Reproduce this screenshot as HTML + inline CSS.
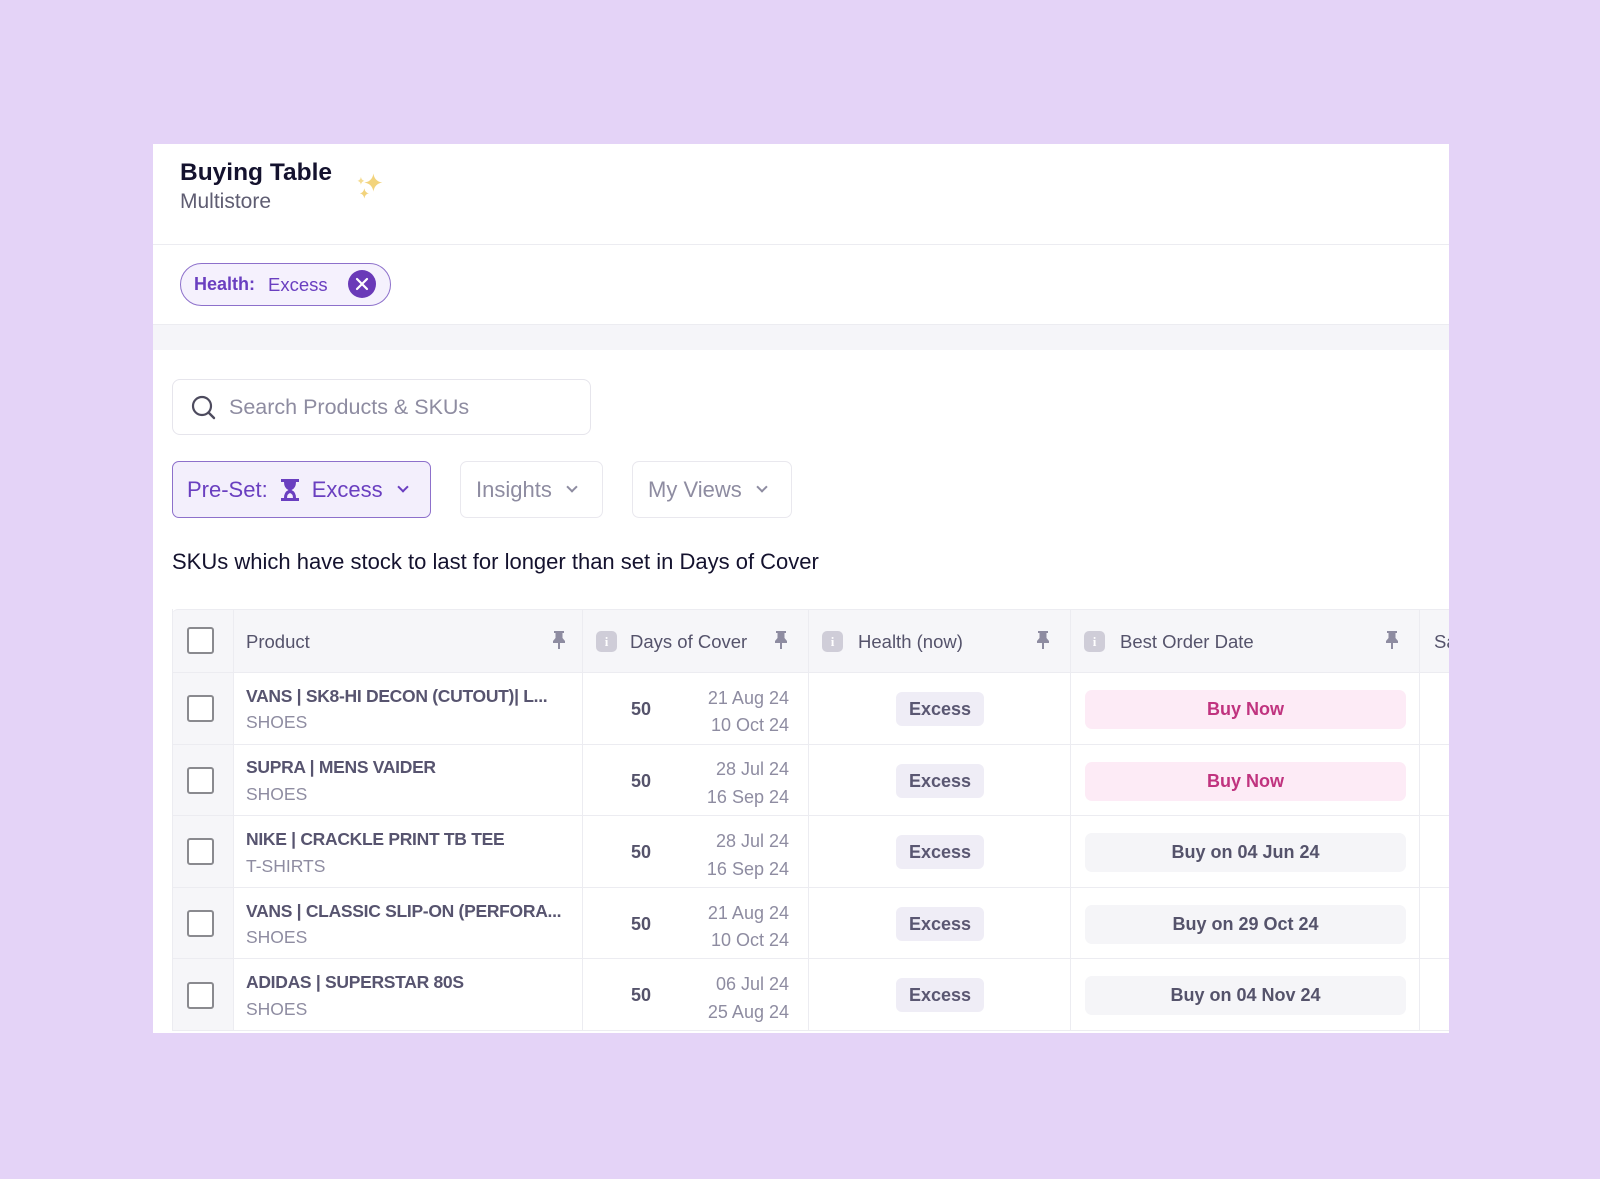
<!DOCTYPE html>
<html><head><meta charset="utf-8"><style>
*{box-sizing:border-box;margin:0;padding:0}
body{width:1600px;height:1179px;background:#e4d3f7;font-family:"Liberation Sans",sans-serif;position:relative;overflow:hidden}
.a{position:absolute}
#card{position:absolute;left:153px;top:144px;width:1296px;height:889px;background:#fff;overflow:hidden}
.t{white-space:nowrap}
.btn{position:absolute;border:1px solid #e9e8ee;border-radius:7px;background:#fff;color:#8e8ca1;font-size:22px;display:flex;align-items:center}
.chev{display:inline-block;width:8px;height:8px;border-right:2px solid currentColor;border-bottom:2px solid currentColor;transform:rotate(45deg);margin-left:16px;margin-top:-5px}
.vl{position:absolute;top:465px;width:1px;height:421px;background:#ececf1}
.hl{position:absolute;left:19px;width:1280px;height:1px;background:#ececf1}
.cb{position:absolute;left:34px;width:27px;height:27px;border:2.5px solid #8a8a8f;border-radius:3px;background:#fff}
.nm{position:absolute;left:93px;font-size:17.5px;font-weight:bold;color:#57546f;letter-spacing:-.3px}
.cat{position:absolute;left:93px;font-size:17.5px;color:#8e8ca1}
.n50{position:absolute;left:473px;width:30px;text-align:center;font-size:18px;font-weight:bold;color:#55536b}
.dt{position:absolute;right:660px;font-size:18px;color:#8e8ca1;text-align:right}
.ex{position:absolute;left:743px;width:88px;height:34px;border-radius:6px;background:#efedf6;color:#5a5772;font-weight:bold;font-size:18px;display:flex;align-items:center;justify-content:center}
.buy{position:absolute;left:932px;width:321px;height:39px;border-radius:7px;display:flex;align-items:center;justify-content:center;font-size:18px;font-weight:bold}
.pk{background:#fdebf6;color:#c0337f}
.gr{background:#f5f5f8;color:#55536b}
.hd{position:absolute;top:487px;font-size:18.5px;color:#55536b}
.inf{position:absolute;top:487px;width:21px;height:21px;border-radius:5px;background:#cfcdd8;color:#fff;font-size:13px;font-weight:bold;text-align:center;line-height:21px;font-family:"Liberation Serif",serif}
.pin{position:absolute;top:486px}
</style></head><body>
<div id="card">
 <div class="a t" style="left:27px;top:15px;font-size:24.5px;font-weight:bold;color:#14122e">Buying Table</div>
 <div class="a t" style="left:27px;top:46px;font-size:21px;color:#5f5d72">Multistore</div>
 <svg class="a" style="left:200px;top:26px" width="34" height="32" viewBox="0 0 30 28">
  <path d="M18 3 Q19 10 26 11 Q19 12 18 19 Q17 12 10 11 Q17 10 18 3Z" fill="#f2d37c"/>
  <path d="M7 6 Q7.5 9 10 9.5 Q7.5 10 7 13 Q6.5 10 4 9.5 Q6.5 9 7 6Z" fill="#f5dc92"/>
  <path d="M10 16 Q10.7 20 14 20.5 Q10.7 21 10 25 Q9.3 21 6 20.5 Q9.3 20 10 16Z" fill="#f2d37c"/>
 </svg>
 <div class="a" style="left:0;top:100px;width:1296px;height:1px;background:#ececf1"></div>
 <div class="a" style="left:27px;top:119px;width:211px;height:43px;border:1.5px solid #8d70cb;border-radius:22px;background:#f5f1fd"></div>
 <div class="a t" style="left:41px;top:130px;font-size:18px;font-weight:bold;color:#6a3fc0">Health:</div>
 <div class="a t" style="left:115px;top:130px;font-size:18.5px;color:#6a3fc0">Excess</div>
 <div class="a" style="left:195px;top:126px;width:28px;height:28px;border-radius:50%;background:#6a3ab8"></div>
 <svg class="a" style="left:195px;top:126px" width="28" height="28"><path d="M9 9L19 19M19 9L9 19" stroke="#fff" stroke-width="2.2" stroke-linecap="round"/></svg>
 <div class="a" style="left:0;top:180px;width:1296px;height:26px;background:#f5f5f9;border-top:1px solid #ececf1"></div>
 <div class="a" style="left:19px;top:235px;width:419px;height:56px;border:1px solid #e6e5ec;border-radius:8px"></div>
 <svg class="a" style="left:37px;top:250px" width="28" height="28"><circle cx="12" cy="12" r="9" fill="none" stroke="#4d4b5e" stroke-width="2.2"/><path d="M18.5 18.5L24 24" stroke="#4d4b5e" stroke-width="2.4" stroke-linecap="round"/></svg>
 <div class="a t" style="left:76px;top:251px;font-size:21.5px;color:#8e8ca1">Search Products &amp; SKUs</div>
 <div class="btn" style="left:19px;top:317px;width:259px;height:57px;border:1.5px solid #8d70cb;background:#f3effc;color:#6a3fc0;padding-left:14px">
  <span>Pre-Set:</span>
  <svg style="margin:0 12px 0 12px" width="20" height="24" viewBox="0 0 20 24"><path d="M1 1H19V4H16Q16 10 11.5 12Q16 14 16 20H19V23H1V20H4Q4 14 8.5 12Q4 10 4 4H1Z" fill="#6a3fc0"/><path d="M7 20Q7 16 10 15Q13 16 13 20Z" fill="#f3effc"/></svg>
  <span>Excess</span><span class="chev"></span></div>
 <div class="btn" style="left:307px;top:317px;width:143px;height:57px;padding-left:15px"><span>Insights</span><span class="chev"></span></div>
 <div class="btn" style="left:479px;top:317px;width:160px;height:57px;padding-left:15px"><span>My Views</span><span class="chev"></span></div>
 <div class="a t" style="left:19px;top:405px;font-size:22px;color:#14122e">SKUs which have stock to last for longer than set in Days of Cover</div>

 <div class="a" style="left:19px;top:465px;width:1280px;height:64px;background:#f6f6f9;border-top:1px solid #ececf1;border-radius:6px 0 0 0"></div>
 <div class="a" style="left:19px;top:529px;width:61px;height:357px;background:#f6f6f9"></div>
 <div class="vl" style="left:19px"></div><div class="vl" style="left:80px"></div><div class="vl" style="left:429px"></div><div class="vl" style="left:655px"></div><div class="vl" style="left:917px"></div><div class="vl" style="left:1266px"></div>
 <div class="hl" style="top:528px"></div><div class="hl" style="top:600px"></div><div class="hl" style="top:671px"></div><div class="hl" style="top:743px"></div><div class="hl" style="top:814px"></div><div class="hl" style="top:886px"></div>
 <div class="cb" style="top:483px"></div>
 <div class="hd" style="left:93px">Product</div>
 <div class="hd" style="left:477px">Days of Cover</div>
 <div class="hd" style="left:705px">Health (now)</div>
 <div class="hd" style="left:967px">Best Order Date</div>
 <div class="hd" style="left:1281px">Sa</div>
 <div class="inf" style="left:443px">i</div><div class="inf" style="left:669px">i</div><div class="inf" style="left:931px">i</div>
 <svg class="pin" style="left:399px" width="14" height="20" viewBox="0 0 14 20"><path d="M2 1H12V3H10.5V8L13 11V13H8V19H6V13H1V11L3.5 8V3H2Z" fill="#8e8ca1"/></svg>
 <svg class="pin" style="left:621px" width="14" height="20" viewBox="0 0 14 20"><path d="M2 1H12V3H10.5V8L13 11V13H8V19H6V13H1V11L3.5 8V3H2Z" fill="#8e8ca1"/></svg>
 <svg class="pin" style="left:883px" width="14" height="20" viewBox="0 0 14 20"><path d="M2 1H12V3H10.5V8L13 11V13H8V19H6V13H1V11L3.5 8V3H2Z" fill="#8e8ca1"/></svg>
 <svg class="pin" style="left:1232px" width="14" height="20" viewBox="0 0 14 20"><path d="M2 1H12V3H10.5V8L13 11V13H8V19H6V13H1V11L3.5 8V3H2Z" fill="#8e8ca1"/></svg>

 <div class="cb" style="top:551px"></div>
 <div class="nm" style="top:542px">VANS | SK8-HI DECON (CUTOUT)| L...</div><div class="cat" style="top:568px">SHOES</div>
 <div class="n50" style="top:555px">50</div><div class="dt" style="top:544px">21 Aug 24</div><div class="dt" style="top:571px">10 Oct 24</div>
 <div class="ex" style="top:548px">Excess</div><div class="buy pk" style="top:546px">Buy Now</div>

 <div class="cb" style="top:623px"></div>
 <div class="nm" style="top:613px">SUPRA | MENS VAIDER</div><div class="cat" style="top:640px">SHOES</div>
 <div class="n50" style="top:627px">50</div><div class="dt" style="top:615px">28 Jul 24</div><div class="dt" style="top:643px">16 Sep 24</div>
 <div class="ex" style="top:620px">Excess</div><div class="buy pk" style="top:618px">Buy Now</div>

 <div class="cb" style="top:694px"></div>
 <div class="nm" style="top:685px">NIKE | CRACKLE PRINT TB TEE</div><div class="cat" style="top:712px">T-SHIRTS</div>
 <div class="n50" style="top:698px">50</div><div class="dt" style="top:687px">28 Jul 24</div><div class="dt" style="top:715px">16 Sep 24</div>
 <div class="ex" style="top:691px">Excess</div><div class="buy gr" style="top:689px">Buy on 04 Jun 24</div>

 <div class="cb" style="top:766px"></div>
 <div class="nm" style="top:757px">VANS | CLASSIC SLIP-ON (PERFORA...</div><div class="cat" style="top:783px">SHOES</div>
 <div class="n50" style="top:770px">50</div><div class="dt" style="top:759px">21 Aug 24</div><div class="dt" style="top:786px">10 Oct 24</div>
 <div class="ex" style="top:763px">Excess</div><div class="buy gr" style="top:761px">Buy on 29 Oct 24</div>

 <div class="cb" style="top:838px"></div>
 <div class="nm" style="top:828px">ADIDAS | SUPERSTAR 80S</div><div class="cat" style="top:855px">SHOES</div>
 <div class="n50" style="top:841px">50</div><div class="dt" style="top:830px">06 Jul 24</div><div class="dt" style="top:858px">25 Aug 24</div>
 <div class="ex" style="top:834px">Excess</div><div class="buy gr" style="top:832px">Buy on 04 Nov 24</div>
</div>
</body></html>
